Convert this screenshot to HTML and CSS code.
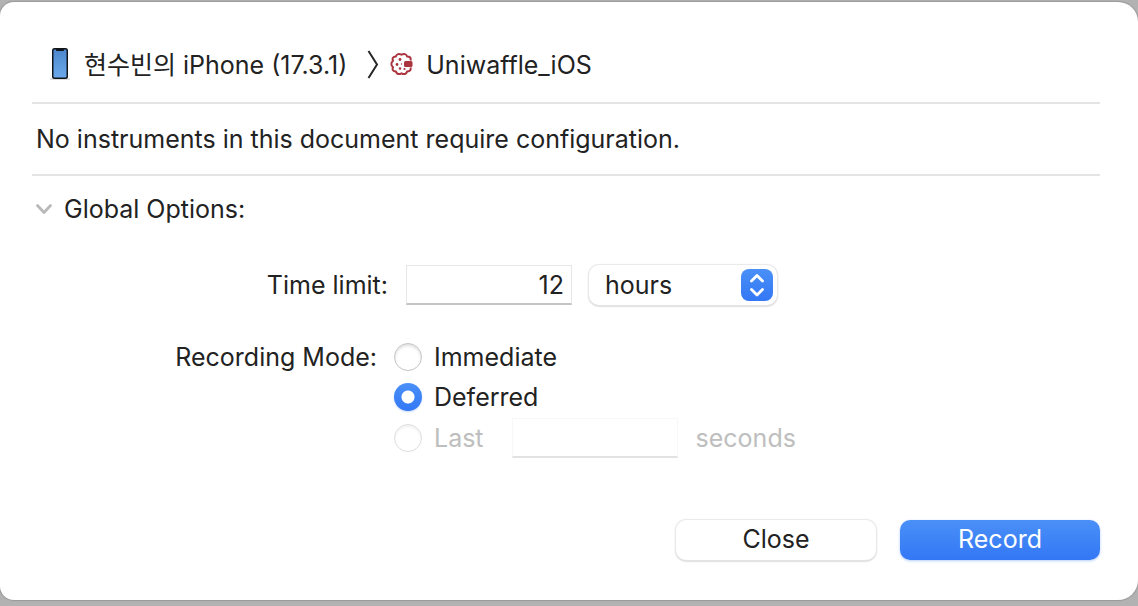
FILE: index.html
```html
<!DOCTYPE html>
<html lang="en">
<head>
<meta charset="utf-8">
<meta name="viewport" content="width=device-width, initial-scale=1">
<title>Recording Options</title>
<link rel="stylesheet" href="styles.css">
</head>
<body>
<main class="dialog">
  <header class="target">
    <svg class="phone" width="20" height="36" viewBox="0 0 20 36" aria-hidden="true">
      <defs>
        <linearGradient id="screen" x1="0" y1="0" x2="0" y2="1"><stop offset="0" stop-color="#4c87cb"/><stop offset="1" stop-color="#6ba8eb"/></linearGradient>
      </defs>
      <path d="M0 32.200h20" stroke="#dcdcdc" stroke-width="1.500"/>
      <rect x="2" y="1" width="16" height="31" rx="2.500" fill="#111519"/>
      <rect x="3.500" y="2.500" width="13" height="28" rx="1.200" fill="url(#screen)"/>
      <path d="M6 2h8v1.200q0 .8-.8.8H6.800q-.8 0-.8-.8z" fill="#111519"/>
    </svg>
    <span class="device" lang="ko">현수빈의 iPhone (17.3.1)</span>
    <svg class="separator" width="12" height="30" viewBox="0 0 12 30" fill="none" stroke="#262626" stroke-width="2" aria-hidden="true"><path d="M1.500 1L10 14.500 1.500 28"/></svg>
    <svg class="app-icon" width="24" height="24" viewBox="0 0 24 24" aria-hidden="true">
      <path d="M20.500 7.500Q21.500 3.500 17.200 3.500Q15.500 -.3 11.500 1.700Q7.500 -.3 5.800 3.500Q1.500 4 3 7.800Q-.3 11 3 14.200Q1.500 18.200 5.800 18.500Q7.500 22.500 11.500 20.300Q15.500 22.500 17.200 18.500Q21.500 18.200 20.500 14.500" fill="none" stroke="#aa353e" stroke-width="2"/>
      <rect x="14" y="8" width="8.500" height="6" rx="1.500" fill="#aa353e"/>
      <g fill="#aa353e"><circle cx="10" cy="6.500" r="1.400"/><circle cx="7" cy="11.500" r="1.400"/><circle cx="11.500" cy="11" r=".7"/><circle cx="10" cy="15.500" r="1.200"/><circle cx="14.500" cy="16" r="1.100"/></g>
    </svg>
    <span>Uniwaffle_iOS</span>
  </header>
  <p class="notice">No instruments in this document require configuration.</p>
  <details class="options" open>
    <summary class="summary">
      <svg width="18" height="12" viewBox="0 0 18 12" fill="none" stroke="#b9b9b9" stroke-width="2.800" stroke-linecap="round" stroke-linejoin="round" aria-hidden="true"><path d="M2.500 2.500l6.500 7 6.500-7"/></svg>
      <span>Global Options:</span>
    </summary>
    <div class="time-row">
      <label class="time-label" for="limit">Time limit:</label>
      <input class="field" id="limit" type="text" value="12">
      <div class="picker">
        <select class="select" aria-label="Time unit"><option>minutes</option><option selected>hours</option></select>
        <svg class="stepper" width="32" height="32" viewBox="0 0 32 32" fill="none" aria-hidden="true">
          <defs><linearGradient id="blue" x1="0" y1="0" x2="0" y2="1"><stop offset="0" stop-color="#4a90f7"/><stop offset="1" stop-color="#3377f5"/></linearGradient></defs>
          <rect width="32" height="32" rx="8" fill="url(#blue)"/>
          <path d="M10.500 12l5.500-5.500 5.500 5.500M10.500 20.500l5.500 5.500 5.500-5.500" stroke="#fff" stroke-width="2.800" stroke-linecap="round" stroke-linejoin="round"/>
        </svg>
      </div>
    </div>
    <div class="mode-row" role="radiogroup" aria-labelledby="mode">
      <span class="mode-label" id="mode">Recording Mode:</span>
      <div class="modes">
        <label class="choice"><input class="radio" type="radio" name="mode">Immediate</label>
        <label class="choice"><input class="radio" type="radio" name="mode" checked>Deferred</label>
        <div class="last-row">
          <label class="choice"><input class="radio" type="radio" name="mode" disabled>Last</label>
          <input class="field" id="seconds" type="text" disabled>
          <label class="unit" for="seconds">seconds</label>
        </div>
      </div>
    </div>
  </details>
  <footer class="actions">
    <button class="button" type="button">Close</button>
    <button class="button primary" type="button">Record</button>
  </footer>
</main>
</body>
</html>
```
FILE: styles.css
```css
* {
  box-sizing: border-box;
}

body {
  margin: 0;
  min-height: 100vh;
  display: flex;
  padding: 2px 0 6px;
  background: #b2b2b2;
  color: #222;
  font: 25px/32px Inter, "Noto Sans CJK KR", sans-serif;
}

.dialog {
  flex: 1;
  display: flex;
  flex-direction: column;
  padding: 32px 38px 40px 32px;
  background: #fff;
  border-radius: 14px 20px 20px 14px;
  box-shadow: 0 0 1px 1px #999;
}

.target {
  display: flex;
  align-items: center;
  height: 70px;
  padding: 0 0 6px 18px;
  border-bottom: 2px solid #e4e4e4;
}

.device {
  margin-left: 14px;
}

.separator {
  margin-left: 20px;
}

.app-icon {
  margin: 0 12px 0 11px;
}

.notice {
  margin: 0;
  padding: 19px 4px;
  border-bottom: 2px solid #e4e4e4;
}

.summary {
  display: flex;
  align-items: center;
  gap: 11px;
  padding: 17px 3px 0;
  list-style: none;
}

.time-row {
  display: flex;
  align-items: center;
  margin-top: 40px;
}

.time-label {
  width: 356px;
  margin-right: 18px;
  text-align: right;
}

.field {
  width: 166px;
  height: 40px;
  padding: 0 7px;
  border: 1px solid #e6e6e6;
  border-bottom: 2px solid #c4c4c4;
  border-radius: 0;
  background: #fff;
  color: inherit;
  font: inherit;
  text-align: right;
}

.field:disabled {
  border-color: #f7f7f7;
  border-bottom-color: #e2e2e2;
}

.picker {
  display: grid;
  align-items: center;
  width: 188px;
  margin-left: 17px;
}

.select,
.stepper {
  grid-area: 1 / 1;
}

.stepper {
  justify-self: end;
  margin-right: 4px;
  pointer-events: none;
}

.select {
  appearance: none;
  width: 100%;
  height: 40px;
  padding: 0 16px;
  border: 0;
  border-radius: 10px;
  background: #fff;
  color: inherit;
  font: inherit;
  box-shadow: 0 0 1px 1px #e8e8e8, 0 1px 2px #999;
}

.mode-row {
  display: flex;
  margin-top: 36px;
}

.mode-label {
  width: 345px;
  margin-right: 17px;
  text-align: right;
}

.modes {
  display: grid;
  gap: 8px;
}

.choice {
  display: flex;
  align-items: center;
  gap: 12px;
}

.radio {
  appearance: none;
  width: 28px;
  height: 28px;
  margin: 0;
  border: 1px solid #c4c4c4;
  border-radius: 50%;
  background: #fff;
  box-shadow: inset 0 2px 3px #e0e0e0;
}

.radio:checked {
  border: 0;
  background: radial-gradient(circle, #fff 6px, transparent 7px), linear-gradient(#4a90f7, #3377f5);
  box-shadow: 0 1px 2px #c7dafb;
}

.radio:disabled {
  border-color: #dedede;
  box-shadow: inset 0 2px 3px #f2f2f2;
}

.last-row {
  display: flex;
  align-items: center;
  margin-top: -3px;
  color: #bebebe;
}

.last-row .field {
  margin: 0 18px 0 28px;
}

.actions {
  display: flex;
  justify-content: flex-end;
  gap: 24px;
  margin-top: auto;
}

.button {
  width: 200px;
  height: 40px;
  padding: 0 0 2px;
  border: 0;
  border-radius: 10px;
  background: #fff;
  color: inherit;
  font: inherit;
  box-shadow: 0 0 1px 1px #e8e8e8, 0 1px 2px #999;
}

.primary {
  background: linear-gradient(#4a90f7, #3377f5);
  color: #fff;
  box-shadow: 0 1px 3px #b5cefb;
}
```
